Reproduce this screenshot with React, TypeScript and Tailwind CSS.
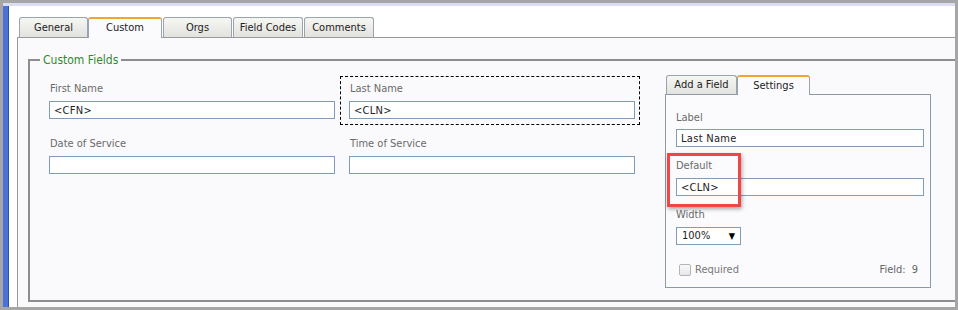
import { ReactNode } from "react";

const font = "font-['DejaVu_Sans_Condensed','DejaVu_Sans',sans-serif]";

function Tab({
  label,
  active,
  width,
  height,
}: {
  label: string;
  active?: boolean;
  width: string;
  height?: string;
}) {
  if (active) {
    return (
      <div
        className={`${width} ${height ?? "h-[21px]"} relative z-10 flex items-center justify-center rounded-t-[3px] border-x border-[#9aa4ae] border-t-2 border-t-[#f2a531] bg-[#fbfbfd] text-[11px] text-[#222]`}
      >
        {label}
      </div>
    );
  }
  return (
    <div
      className={`${width} ${height ?? "h-[20px]"} flex items-center justify-center rounded-t-[3px] border border-b-0 border-[#9aa4ae] bg-gradient-to-b from-[#f6f6f3] to-[#e2e2de] pt-px text-[11px] text-[#222]`}
    >
      {label}
    </div>
  );
}

function Field({
  label,
  value,
  selected,
}: {
  label: string;
  value?: string;
  selected?: boolean;
}) {
  return (
    <div
      className={`border ${
        selected ? "border-dashed border-black" : "border-transparent"
      } pl-[8px] pr-[4px] pt-[3px] pb-[5px]`}
    >
      <div className="ml-[1px] h-[16px] pt-[2px] text-[11px] leading-[14px] text-[#6a6a6a]">
        {label}
      </div>
      <Input value={value} className="mt-[5px]" />
    </div>
  );
}

function Input({ value, className }: { value?: string; className?: string }) {
  return (
    <div
      className={`h-[18px] border border-[#7f9db9] bg-white pl-[4px] pt-px text-[11px] leading-[15px] tracking-[0.3px] text-[#222] ${
        className ?? ""
      }`}
    >
      {value}
    </div>
  );
}

function SideLabel({ children, className }: { children: ReactNode; className?: string }) {
  return (
    <div
      className={`h-[16px] pt-[2px] text-[11px] leading-[14px] text-[#6a6a6a] ${className ?? ""}`}
    >
      {children}
    </div>
  );
}

export default function App() {
  return (
    <div
      className={`${font} flex h-[310px] w-[958px] flex-col overflow-hidden border-[3px] border-[#a6a6a6] bg-white`}
    >
      {/* top stripe */}
      <div className="h-[3px] shrink-0 bg-[#dcdcf5]" />

      <div className="flex min-h-0 flex-1">
        {/* left accent */}
        <div className="w-[5px] shrink-0 bg-[#4a72d8]" />
        <div className="w-px shrink-0 bg-[#2d4fae]" />
        <div className="w-[8px] shrink-0 bg-white" />

        <div className="flex min-w-0 flex-1 flex-col pt-[11px]">
          {/* main tabs */}
          <div className="relative z-10 -mb-px flex items-start pl-[2px]">
            <Tab label="General" width="w-[69px]" />
            <Tab label="Custom" width="w-[74px]" active />
            <div className="w-px" />
            <Tab label="Orgs" width="w-[69px]" />
            <div className="w-px" />
            <Tab label="Field Codes" width="w-[70px]" />
            <div className="w-px" />
            <Tab label="Comments" width="w-[70px]" />
          </div>

          {/* tab panel */}
          <div className="flex-1 border-l border-t border-[#999] bg-[#fafafc] pl-[10px] pt-[21px]">
            <div className="relative h-[243px] w-[935px] border-2 border-[#8d8d8d] pl-[10px] pt-[15px]">
              <span className="absolute left-[10px] top-[-8px] bg-[#fafafc] px-[3px] text-[12px] leading-[14px] text-[#2f8a2f]">
                Custom Fields
              </span>

              <div className="flex items-start">
                <div className="grid w-[600px] grid-cols-2 gap-y-[6px]">
                  <Field label="First Name" value="<CFN>" />
                  <Field label="Last Name" value="<CLN>" selected />
                  <Field label="Date of Service" />
                  <Field label="Time of Service" />
                </div>

                {/* settings block */}
                <div className="-mt-px ml-[25px] flex flex-col">
                  <div className="relative z-10 -mb-px flex items-start pl-px">
                    <Tab label="Add a Field" width="w-[71px]" height="h-[19px]" />
                    <Tab label="Settings" width="w-[73px]" active height="h-[20px]" />
                  </div>
                  <div className="relative h-[194px] w-[266px] border border-[#8c9aa6] bg-[#fbfbfd] pl-[10px] pr-[6px] pt-[14px]">
                    <SideLabel>Label</SideLabel>
                    <Input value="Last Name" className="mt-[4px]" />
                    <SideLabel className="mt-[10px]">Default</SideLabel>
                    <Input value="<CLN>" className="mt-[5px]" />
                    <SideLabel className="mt-[10px]">Width</SideLabel>
                    <div className="mt-[5px] flex h-[18px] w-[65px] items-center justify-between border border-[#7f9db9] bg-white pl-[5px] pr-[5px] pt-px text-[11px] text-[#222]">
                      <span>100%</span>
                      <span className="text-[9px] text-black">▼</span>
                    </div>

                    <div className="mt-[17px] flex h-[16px] items-center text-[11px]">
                      <div className="ml-[3px] h-[12px] w-[12px] rounded-[2px] border border-[#b4b4b4] bg-gradient-to-b from-[#fafafa] to-[#e6e6e6]" />
                      <span className="ml-[4px] pt-px text-[#777]">Required</span>
                      <span className="ml-auto mr-[6px] pt-px text-[#666]">
                        Field:<span className="ml-[6px]">9</span>
                      </span>
                    </div>

                    {/* highlight */}
                    <div className="absolute left-px top-[58px] h-[54px] w-[74px] border-[3px] border-[#f04646] shadow-[1px_2px_4px_rgba(0,0,0,0.35)]" />
                  </div>
                </div>
              </div>
            </div>
          </div>
        </div>
      </div>
    </div>
  );
}
